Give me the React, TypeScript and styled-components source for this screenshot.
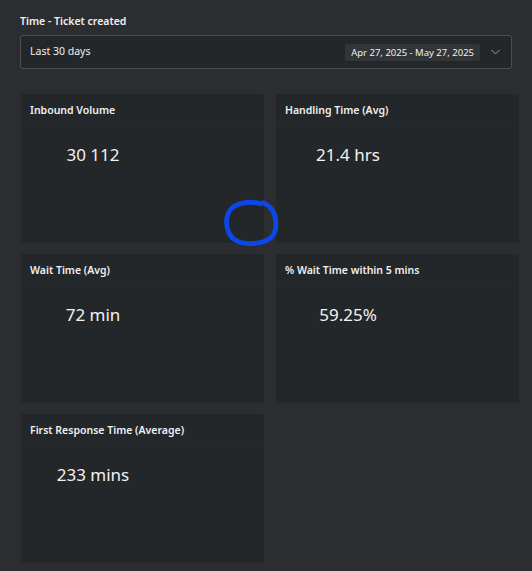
import React from "react";
import styled, { createGlobalStyle } from "styled-components";

const GlobalStyle = createGlobalStyle`
  html, body {
    margin: 0;
    padding: 0;
    background: #2c2d30;
  }
  body {
    font-family: "Noto Sans", "Open Sans", sans-serif;
    color: #f2f2f2;
  }
`;

const metrics = [
  { title: "Inbound Volume", value: "30 112" },
  { title: "Handling Time (Avg)", value: "21.4 hrs" },
  { title: "Wait Time (Avg)", value: "72 min" },
  { title: "% Wait Time within 5 mins", value: "59.25%" },
  { title: "First Response Time (Average)", value: "233 mins" },
];

const App = () => {
  return (
    <>
      <GlobalStyle />
      <Page>
        <FilterLabel>Time - Ticket created</FilterLabel>
        <Select>
          <SelectText>Last 30 days</SelectText>
          <SelectRight>
            <DatePill>Apr 27, 2025 - May 27, 2025</DatePill>
            <svg width="9" height="6" viewBox="0 0 9 6">
              <path
                d="M0.5 1 L4.5 5 L8.5 1"
                fill="none"
                stroke="#9a9da0"
                strokeWidth="1"
              />
            </svg>
          </SelectRight>
        </Select>

        <Grid>
          {metrics.map((m) => (
            <Card key={m.title}>
              <CardTitle>{m.title}</CardTitle>
              <CardValue>{m.value}</CardValue>
            </Card>
          ))}
          <Scribble width="58" height="50" viewBox="0 0 60 52">
            <path
              d="M40 6 C30 3 14 4 8 13 C2 22 4 38 14 44 C24 50 44 48 52 40 C58 33 57 16 49 9 C47 7 45 6 43 5"
              fill="none"
              stroke="#0d47e6"
              strokeWidth="5"
              strokeLinecap="round"
            />
          </Scribble>
        </Grid>
      </Page>
    </>
  );
};

export default App;

const Page = styled.div`
  padding: 13px 20px 0 20px;
  width: 532px;
  box-sizing: border-box;
`;

const FilterLabel = styled.div`
  font-size: 10.5px;
  font-weight: 600;
  line-height: 16px;
  color: #f0f0f0;
  margin-bottom: 6px;
`;

const Select = styled.div`
  height: 34px;
  width: 492px;
  box-sizing: border-box;
  border: 1px solid #4b4e51;
  border-radius: 3px;
  background: #242729;
  display: flex;
  align-items: center;
  justify-content: space-between;
  padding: 0 11px 0 9px;
`;

const SelectText = styled.span`
  font-size: 10.5px;
  color: #f0f0f0;
  margin-top: -2px;
`;

const SelectRight = styled.div`
  display: flex;
  align-items: center;
  gap: 11px;
`;

const DatePill = styled.span`
  background: #323538;
  font-size: 9.5px;
  line-height: 17px;
  padding: 0 6px;
  color: #f0f0f0;
  border-radius: 2px;
`;

const Grid = styled.div`
  position: relative;
  margin-top: 25px;
  margin-left: 1px;
  display: grid;
  grid-template-columns: 243px 243px;
  grid-auto-rows: 149px;
  column-gap: 12px;
  row-gap: 11px;
`;

const Card = styled.div`
  background: #232729;
  border-radius: 2px;
  display: flex;
  flex-direction: column;
`;

const CardTitle = styled.div`
  font-size: 10.5px;
  font-weight: 600;
  line-height: 14px;
  padding: 9px 9px 8px;
  border-bottom: 1px solid #26292c;
  color: #f0f0f0;
`;

const CardValue = styled.div`
  width: 144px;
  text-align: center;
  font-size: 17px;
  line-height: 22px;
  margin-top: 18px;
  color: #f2f2f2;
`;

const Scribble = styled.svg`
  position: absolute;
  left: 201px;
  top: 104px;
`;
